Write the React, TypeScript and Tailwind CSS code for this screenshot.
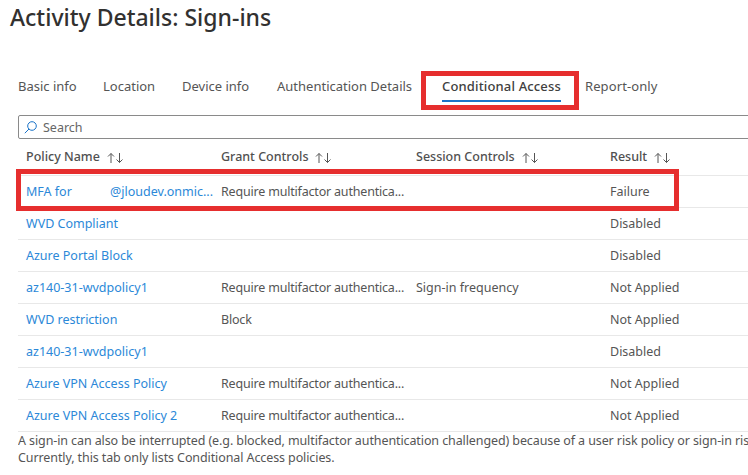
import React from 'react'

const tabs = ['Basic info', 'Location', 'Device info', 'Authentication Details']

const rows = [
  { name: 'WVD Compliant', grant: '', session: '', result: 'Disabled' },
  { name: 'Azure Portal Block', grant: '', session: '', result: 'Disabled' },
  { name: 'az140-31-wvdpolicy1', grant: 'Require multifactor authentica...', session: 'Sign-in frequency', result: 'Not Applied' },
  { name: 'WVD restriction', grant: 'Block', session: '', result: 'Not Applied' },
  { name: 'az140-31-wvdpolicy1', grant: '', session: '', result: 'Disabled' },
  { name: 'Azure VPN Access Policy', grant: 'Require multifactor authentica...', session: '', result: 'Not Applied' },
  { name: 'Azure VPN Access Policy 2', grant: 'Require multifactor authentica...', session: '', result: 'Not Applied' },
]

function SortArrows() {
  return (
    <svg width="17" height="12" viewBox="0 0 17 12" fill="none" stroke="#555" strokeWidth="1" className="ml-[7px] shrink-0">
      <path d="M4 11V1.5M1 4.5l3-3 3 3" />
      <path d="M12.5 1v9.5M9.5 7.5l3 3 3-3" />
    </svg>
  )
}

function HeaderCell({ label, width }: { label: string; width: string }) {
  return (
    <div className={'flex items-center pl-2 shrink-0 font-medium text-[#505050] ' + width}>
      {label}
      <SortArrows />
    </div>
  )
}

export default function App() {
  return (
    <div className="relative w-[748px] h-[475px] overflow-hidden bg-white text-[12.5px] text-[#555] whitespace-nowrap font-['Noto_Sans','Open_Sans',sans-serif]">
      <h1 className="h-[35px] pl-[10px] text-[23px] leading-[35px] font-medium text-[#323130]">
        Activity Details: Sign-ins
      </h1>

      {/* tabs */}
      <div className="flex pl-[18px] mt-[35px] h-[45px] text-[13px]">
        {tabs.map(function (t, i) {
          return (
            <div key={t} className={i === 3 ? 'w-[165px] pt-[7px]' : i === 0 ? 'w-[85px] pt-[7px]' : i === 1 ? 'w-[79px] pt-[7px]' : 'w-[95px] pt-[7px]'}>
              {t}
            </div>
          )
        })}
        <div className="w-[143px] h-[32px] pt-[7px]">
          <div className="inline-block w-[119px] h-[25px] border-b-[2px] border-[#1a73c8] font-medium tracking-[0.15px] text-[#404040]">Conditional Access</div>
        </div>
        <div className="pt-[7px] tracking-[0.1px]">Report-only</div>
      </div>

      {/* search */}
      <div className="flex items-center gap-[6px] ml-[18px] w-[760px] h-[24px] pl-[5px] pt-[2px] border border-[#8a8a8a] rounded-[2px] text-[#666]">
        <svg width="13" height="13" viewBox="0 0 13 13" fill="none" stroke="#1a73c8" strokeWidth="1" className="-mt-[2px]">
          <circle cx="8" cy="5" r="4.3" />
          <path d="M5 8L0.8 12.2" />
        </svg>
        Search
      </div>

      {/* table */}
      <div className="ml-[18px] w-[760px] mt-[1px]">
        <div className="flex items-center h-[36px] border-b border-[#e8e8e8]">
          <HeaderCell label="Policy Name" width="w-[195px]" />
          <HeaderCell label="Grant Controls" width="w-[195px]" />
          <HeaderCell label="Session Controls" width="w-[194px]" />
          <HeaderCell label="Result" width="w-[170px]" />
        </div>
        <div className="flex items-center h-[32px] pt-[1px] border-b border-[#e8e8e8]">
          <div className="flex pl-2 w-[195px] shrink-0 text-[#2b88d8]">
            <span className="w-[85px]">MFA for</span>
            <span>@jloudev.onmic...</span>
          </div>
          <div className="pl-2 w-[195px] shrink-0 tracking-[-0.19px]">Require multifactor authentica...</div>
          <div className="pl-2 w-[194px] shrink-0"></div>
          <div className="pl-2 w-[170px] shrink-0">Failure</div>
        </div>
        {rows.map(function (r, i) {
          return (
            <div key={i} className="flex items-center h-[32px] pt-[1px] border-b border-[#e8e8e8]">
              <div className="pl-2 w-[195px] shrink-0 text-[#2b88d8]">{r.name}</div>
              <div className="pl-2 w-[195px] shrink-0 tracking-[-0.19px]">{r.grant}</div>
              <div className="pl-2 w-[194px] shrink-0">{r.session}</div>
              <div className="pl-2 w-[170px] shrink-0">{r.result}</div>
            </div>
          )
        })}
      </div>

      <p className="ml-[18px] leading-[17px] w-[730px] overflow-hidden tracking-[-0.1px]">
        A sign-in can also be interrupted (e.g. blocked, multifactor authentication challenged) because of a user risk policy or sign-in risk policy.
        <br />
        Currently, this tab only lists Conditional Access policies.
      </p>

      {/* red highlight boxes drawn over the screenshot */}
      <div className="absolute left-[421px] top-[71px] w-[158px] h-[39px] border-[5px] border-[#e62e2e]" />
      <div className="absolute left-[16px] top-[169px] w-[663px] h-[42px] border-[5px] border-[#e62e2e]" />
    </div>
  )
}
